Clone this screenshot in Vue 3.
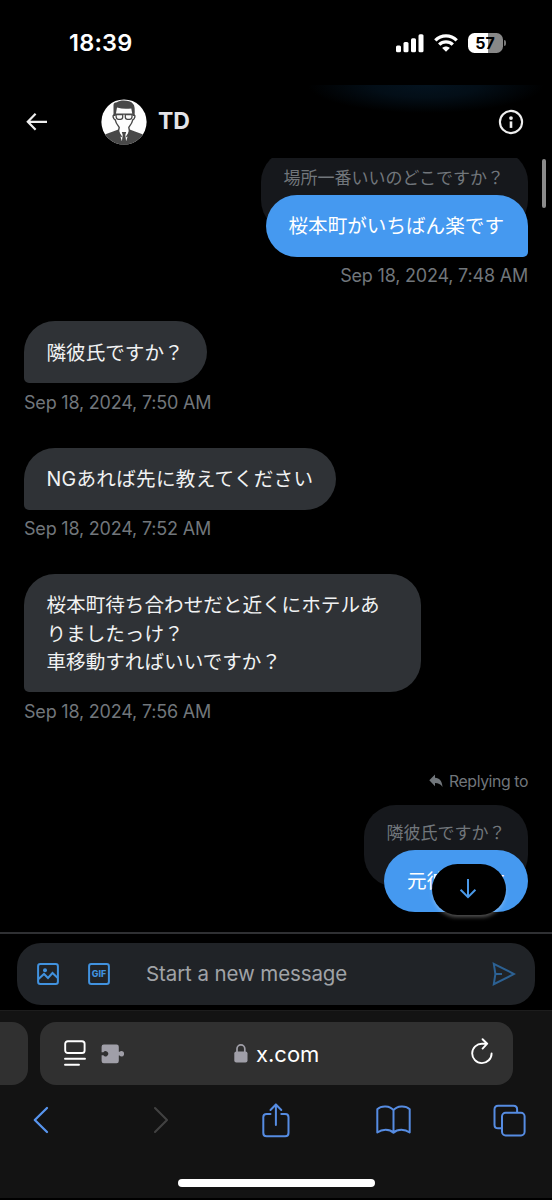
<script setup>
const received = [
  { lines: ['隣彼氏ですか？'], time: 'Sep 18, 2024, 7:50 AM', size: 'short' },
  { lines: ['NGあれば先に教えてください'], time: 'Sep 18, 2024, 7:52 AM', size: 'medium' },
  { lines: ['桜本町待ち合わせだと近くにホテルあ', 'りましたっけ？', '車移動すればいいですか？'], time: 'Sep 18, 2024, 7:56 AM', size: 'long' },
]
</script>

<template>
  <div class="phone">
    <div class="status">
      <span class="clock">18:39</span>
      <div class="indicators">
        <svg class="signal" width="28" height="19" viewBox="0 0 28 19" fill="#fff">
          <rect x="0" y="11.5" width="5" height="6.7" rx="1.5" />
          <rect x="7.5" y="8" width="5" height="10.2" rx="1.5" />
          <rect x="15" y="4.2" width="5" height="14" rx="1.5" />
          <rect x="22.5" y="0.3" width="5" height="17.9" rx="1.5" />
        </svg>
        <svg class="wifi" width="24" height="18" viewBox="0 0 24 18" fill="none" stroke="#fff" stroke-width="3.3">
          <path d="M1.3 6.4C7.4 .3 16.6 .3 22.7 6.4" />
          <path d="M5.2 10.6C9 6.9 15 6.9 18.8 10.6" />
          <path d="M12 17.8 8.2 14.1C10.3 12.1 13.7 12.1 15.8 14.1Z" fill="#fff" stroke="none" />
        </svg>
        <div class="battery"><span>57</span></div>
        <i class="battery-tip"></i>
      </div>
    </div>

    <header class="header">
      <svg class="back" width="22" height="20" viewBox="0 0 22 20" fill="none" stroke="#eee" stroke-width="2.2">
        <path d="M9.6 1.8 1.8 9.8 9.6 17.8M2 9.8H21" />
      </svg>
      <svg class="avatar" width="46" height="46" viewBox="0 0 46 46">
        <defs><clipPath id="face"><circle cx="23" cy="23" r="22.6" /></clipPath></defs>
        <g clip-path="url(#face)">
          <rect width="46" height="46" fill="#fdfdfd" />
          <path d="M0 46V38Q5 34.5 12 32.5L17.3 30.5 22 35 23.5 35 28.7 30.5 34 32.5Q41 34.5 46 38V46Z" fill="#484848" />
          <path d="M17.8 29.5 23 34.5 28.2 29.5 26.5 38 25.2 42H20.8L19.5 38Z" fill="#fff" />
          <path d="M20.8 33H25.2L24.3 36 25.6 46H20.4L21.7 36Z" fill="#484848" />
          <path d="M13.2 16C11.3 16 12 20 14.3 21 15 25 17.8 27 18.2 28.5L17.3 33 20.5 38M32.8 16C34.7 16 34 20 31.7 21 31 25 28.2 27 27.8 28.5L28.7 33 25.5 38" fill="none" stroke="#484848" stroke-width="1.4" />
          <path d="M12.5 17V6Q12.5 3.5 16 3.3C19 .8 29 .8 32.2 5Q34.4 7 33.5 17H31.7L30.3 9.4Q23 10.6 16 8.6L14.5 17Z" fill="#484848" />
          <path d="M14 15.2H32M15 15.5H21.7V18Q21.7 20.3 19.4 20.3H17.5Q15.4 20.3 15.2 18ZM24.3 15.5H31V18Q30.8 20.3 28.5 20.3H26.6Q24.3 20.3 24.3 18Z" fill="none" stroke="#484848" stroke-width="1.3" />
        </g>
      </svg>
      <h1>TD</h1>
      <svg class="info" width="26" height="26" viewBox="0 0 26 26">
        <circle cx="13" cy="13" r="11.1" fill="none" stroke="#eee" stroke-width="2.1" />
        <circle cx="13" cy="9.1" r="1.9" fill="#eee" />
        <rect x="11.7" y="12.4" width="2.6" height="6.5" fill="#eee" />
      </svg>
    </header>

    <main class="chat">
      <div class="sent first">
        <div class="quote">場所一番いいのどこですか？</div>
        <div class="bubble blue tail">桜本町がいちばん楽です</div>
        <div class="time">Sep 18, 2024, 7:48 AM</div>
      </div>
      <div v-for="m in received" :key="m.time" class="received">
        <div class="bubble gray" :class="m.size"><div v-for="l in m.lines" :key="l">{{ l }}</div></div>
        <div class="time">{{ m.time }}</div>
      </div>
      <div class="sent">
        <div class="reply">
          <svg width="14" height="14" viewBox="0 0 14 14" fill="#71767b"><path d="M6 .5V3.8C10.7 4 13 7 13.5 13 11.5 10 9.5 9 6 9V12.2L.3 6.3Z" /></svg>
          <span>Replying to</span>
        </div>
        <div class="quote">隣彼氏ですか？</div>
        <div class="bubble blue">元彼氏です</div>
      </div>
      <i class="scrollbar"></i>
      <div class="jump">
        <svg width="18" height="22" viewBox="0 0 18 22" fill="none" stroke="#4a99e9" stroke-width="2"><path d="M9 1V19M1.6 11.8 9 19.2 16.4 11.8" /></svg>
      </div>
    </main>

    <div class="composer">
      <div class="field">
        <svg width="22" height="22" viewBox="0 0 22 22" fill="none" stroke="#4192df" stroke-width="2">
          <rect x="1.1" y="1.1" width="19.8" height="19.8" rx="2.2" />
          <path d="M1.5 16 7 11 11 15 15.5 10 20.5 14.8" />
          <circle cx="8" cy="7.3" r="2" fill="#4192df" stroke="none" />
        </svg>
        <svg class="gif" width="22" height="22" viewBox="0 0 22 22">
          <rect x="1.1" y="1.1" width="19.8" height="19.8" rx="2.2" fill="none" stroke="#4192df" stroke-width="2" />
          <text x="11" y="14.3" text-anchor="middle" textLength="14.4" lengthAdjust="spacingAndGlyphs">GIF</text>
        </svg>
        <span class="placeholder">Start a new message</span>
        <svg class="send" width="24" height="24" viewBox="0 0 24 24" fill="none" stroke="#2c6193" stroke-width="2"><path d="M1.8 1.8 22 12 1.8 22.2 3.4 12ZM3.5 12H10" /></svg>
      </div>
    </div>

    <footer class="browser">
      <div class="tabs">
        <div class="prev-tab"></div>
        <div class="address">
          <svg class="reader" width="22" height="27" viewBox="0 0 22 27" fill="none" stroke="#fff" stroke-width="1.9" stroke-linecap="round">
            <rect x="1.2" y="1.2" width="19.4" height="11.8" rx="2.6" />
            <path d="M1 18.7H21M1 24.7H15" />
          </svg>
          <svg class="puzzle" width="23" height="20" viewBox="0 0 23 20">
            <path d="M2.8.6H15.6Q17.8.6 17.8 2.8V7.8H18.6Q19.4 6.9 20.3 6.9A2.8 2.8 0 0 1 20.3 12.5Q19.4 12.5 18.6 11.6H17.8V17Q17.8 19.2 15.6 19.2H2.8Q.6 19.2.6 17V11.2H2.4A2.6 2.6 0 1 0 2.4 8.2H.6V2.8Q.6.6 2.8.6Z" fill="#a09fa8" />
          </svg>
          <div class="domain">
            <svg width="14" height="19" viewBox="0 0 14 19"><rect x=".3" y="7.6" width="13.2" height="11" rx="2" fill="#a09fa8" /><path d="M3 8V4.8A3.9 3.9 0 0 1 10.8 4.8V8" fill="none" stroke="#a09fa8" stroke-width="1.7" /></svg>
            <span>x.com</span>
          </div>
          <svg class="reload" width="22" height="27" viewBox="0 0 22 27" fill="none" stroke="#fff" stroke-width="1.9" stroke-linecap="round" stroke-linejoin="round">
            <path d="M20.6 15.4A9.7 9.7 0 1 1 11.2 5.7H15.8M11.6 1.2 16.2 5.7 11.6 10.6" />
          </svg>
        </div>
      </div>
      <nav class="toolbar">
        <svg width="16" height="28" viewBox="0 0 16 28" fill="none" stroke="#5895ee" stroke-width="2.3" stroke-linecap="round" stroke-linejoin="round"><path d="M14 2 1.8 14 14 26" /></svg>
        <svg class="forward" width="16" height="28" viewBox="0 0 16 28" fill="none" stroke="#414141" stroke-width="2.1" stroke-linecap="round" stroke-linejoin="round"><path d="M2 2 14 14 2 26" /></svg>
        <svg class="share" width="28" height="35" viewBox="0 0 28 35" fill="none" stroke="#568ce2" stroke-width="2" stroke-linecap="round" stroke-linejoin="round"><path d="M8.5 11H4.6Q1.3 11 1.3 14.3V30Q1.3 33.3 4.6 33.3H23.2Q26.5 33.3 26.5 30V14.3Q26.5 11 23.2 11H19.3M13.9 22V1.5M8.5 7 13.9 1.5 19.3 7" /></svg>
        <svg class="book" width="35" height="30" viewBox="0 0 35 30" fill="none" stroke="#568ce2" stroke-width="2" stroke-linejoin="round"><path d="M17.5 5.2C14 .7 5.5.3 1.3 4.2V27.5C6 24 13.5 23.7 17.5 27.8 21.5 23.7 29 24 33.7 27.5V4.2C29.5.3 21 .7 17.5 5.2ZM17.5 5.2V27.8" /></svg>
        <svg class="pages" width="33" height="33" viewBox="0 0 33 33" fill="none" stroke="#568ce2" stroke-width="2"><rect x="9" y="8.8" width="22.6" height="22.6" rx="3.6" /><path d="M8.6 24.3H5.1Q1.5 24.3 1.5 20.7V5.3Q1.5 1.7 5.1 1.7H20.5Q24.1 1.7 24.1 5.3V8.8" /></svg>
      </nav>
      <i class="home"></i>
    </footer>
  </div>
</template>

<style>
body { margin: 0; background: #000; }
</style>

<style scoped>
* { box-sizing: border-box; }
svg { display: block; flex: none; }
.phone { width: 552px; height: 1200px; overflow: hidden; display: flex; flex-direction: column; background: #000; color: #f1f2f3; font-family: Inter, "Noto Sans CJK JP", sans-serif; }
.status { height: 85px; flex: none; display: flex; justify-content: space-between; padding: 0 46px 0 69px; }
.clock { font-size: 23.5px; font-weight: 600; line-height: 28px; margin-top: 29px; color: #fff; letter-spacing: .2px; }
.indicators { display: flex; margin-top: 33px; height: 20px; }
.signal { margin-top: 1px; }
.wifi { margin: 1px 0 0 9.5px; }
.battery { width: 35px; height: 20px; margin-left: 10px; border-radius: 6.5px; background: linear-gradient(90deg, #fff 57%, #888 57%); color: #000; font-size: 16px; font-weight: 700; line-height: 20px; text-align: center; }
.battery-tip { width: 2.5px; height: 6px; margin: 7px 0 0 1px; border-radius: 0 3px 3px 0; background: #777; }
.header { height: 73px; flex: none; display: flex; align-items: center; padding: 0 28px 0 26px; background: radial-gradient(ellipse 118px 28px at 426px 0, #04131f 0%, #030e17 45%, #000 100%); }
.avatar { margin-left: 53px; }
h1 { flex: 1; margin: -2px 0 0 11px; font-size: 23px; line-height: 28px; font-weight: 700; color: #e4e4e8; }
.chat { position: relative; height: 774px; flex: none; overflow: hidden; padding: 0 24px; }
.sent { display: flex; flex-direction: column; align-items: flex-end; }
.first { margin-top: -8.2px; }
.quote { height: 82px; margin-bottom: -36.8px; padding: 13.7px 22.5px; border-radius: 32px; background: #16181c; color: #71767b; font-size: 17px; line-height: 28px; }
.first .quote { padding-right: 24px; }
.bubble { position: relative; width: fit-content; padding: 17.2px 23px 16.4px; border-radius: 31px; font-size: 19.6px; line-height: 28.2px; white-space: nowrap; }
.blue { background: #4599f0; color: #fff; }
.tail { border-bottom-right-radius: 5px; padding-left: 22px; padding-right: 24px; }
.gray { background: #2f3236; border-bottom-left-radius: 5px; padding-left: 22.5px; }
.medium { width: 312px; letter-spacing: .28px; }
.long { width: 397px; }
.time { height: 64.6px; padding-top: 7.6px; color: #71767b; font-size: 18px; line-height: 24px; letter-spacing: -.2px; white-space: nowrap; }
.reply { display: flex; align-items: center; gap: 6px; height: 48px; padding-top: 2px; color: #71767b; font-size: 15.8px; line-height: 24px; letter-spacing: -.4px; }
.reply svg { margin-top: -2px; }
.scrollbar { position: absolute; right: 6px; top: 1px; width: 4px; height: 49px; border-radius: 2px; background: #8a8a8a; }
.jump { position: absolute; left: 432px; top: 706px; width: 74px; height: 51px; border-radius: 26px; background: #000; display: flex; align-items: center; justify-content: center; padding: 0 2px 2px 0; box-shadow: 0 3px 4px -1px rgba(255, 255, 255, .35); }
.composer { height: 78px; flex: none; border-top: 2px solid #2f3033; padding: 9px 17px 0; }
.field { height: 62px; border-radius: 24px; background: #202327; display: flex; align-items: center; padding: 0 19px 0 20px; }
.gif { margin-left: 29px; }
.gif text { font: 800 8.6px Inter, sans-serif; fill: #4192df; }
.placeholder { flex: 1; margin-left: 36px; color: #a0a3a7; font-size: 20.5px; line-height: 28px; letter-spacing: -.1px; }
.browser { height: 190px; flex: none; background: #131313; border-bottom: 2px solid #000; border-top: 1px solid #1d1d1d; }
.tabs { display: flex; gap: 12px; padding-top: 11px; }
.prev-tab { width: 28px; height: 63px; border-radius: 0 16px 16px 0; background: #303030; }
.address { width: 473px; height: 63px; border-radius: 16px; background: #303030; display: flex; align-items: center; padding: 0 20px 0 24px; }
.puzzle { margin-left: 15px; }
.domain { flex: 1; display: flex; align-items: center; gap: 8px; margin-left: 110px; font-size: 22px; line-height: 28px; color: #fff; }
.reload { margin-top: -4px; }
.toolbar { display: flex; align-items: center; height: 70px; padding-left: 33px; }
.forward { margin-left: 104px; }
.share { margin-left: 93px; }
.book { margin-left: 86px; }
.pages { margin-left: 82px; }
.home { display: block; width: 197px; height: 8px; margin: 24px 0 0 178px; border-radius: 4px; background: #fff; }
</style>
